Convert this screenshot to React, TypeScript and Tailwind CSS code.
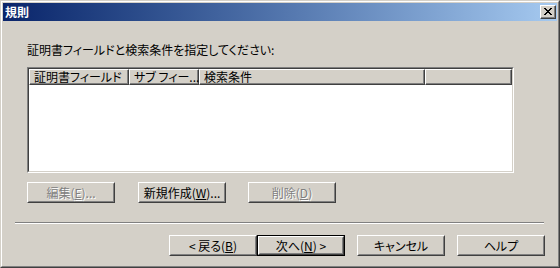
import React from "react";

const FONT =
  "font-['MS_UI_Gothic','Noto_Sans_CJK_JP','Noto_Sans',sans-serif] [font-feature-settings:'palt'] text-[12px] leading-[16px]";

function Btn({
  children,
  disabled,
  isDefault,
}: {
  children: React.ReactNode;
  disabled?: boolean;
  isDefault?: boolean;
}) {
  const inner = (
    <div className="h-full w-full border border-t-white border-l-white border-r-[#404040] border-b-[#404040] bg-[#d4d0c8]">
      <div
        className={
          "flex h-full w-full items-center justify-center border border-t-[#d4d0c8] border-l-[#d4d0c8] border-r-[#808080] border-b-[#808080] " +
          (disabled
            ? "text-[#808080] [text-shadow:1px_1px_0_#ffffff]"
            : "text-black")
        }
      >
        {children}
      </div>
    </div>
  );
  if (isDefault) {
    return (
      <div className="h-[21px] w-[88px] shrink-0 border border-black">{inner}</div>
    );
  }
  return <div className="h-[21px] w-[88px] shrink-0">{inner}</div>;
}

function HeaderCell({
  children,
  className,
}: {
  children?: React.ReactNode;
  className?: string;
}) {
  return (
    <div
      className={
        "h-full shrink-0 border border-t-white border-l-white border-r-[#404040] border-b-[#404040] " +
        (className ?? "")
      }
    >
      <div className="flex h-full w-full items-center whitespace-nowrap border-b border-r border-b-[#808080] border-r-[#808080] pl-[4px] leading-[14px]">
        {children}
      </div>
    </div>
  );
}

export default function App() {
  return (
    <div className={"h-[268px] w-[560px] overflow-hidden " + FONT}>
      <div className="h-full w-full border border-t-[#d4d0c8] border-l-[#d4d0c8] border-r-[#404040] border-b-[#404040] bg-[#d4d0c8]">
        <div className="flex h-full w-full flex-col border border-t-white border-l-white border-r-[#808080] border-b-[#808080] p-[1px]">
          {/* Title bar */}
          <div className="flex h-[18px] shrink-0 items-start justify-between bg-linear-to-r from-[#0a246a] to-[#a6caf0]">
            <span className="pl-[2px] pt-[1px] text-[12px] font-bold leading-[16px] text-white">
              規則
            </span>
            <div className="mr-[1px] mt-[2px] h-[14px] w-[16px] border border-t-white border-l-white border-r-[#404040] border-b-[#404040] bg-[#d4d0c8]">
              <div className="flex h-full w-full items-center justify-center border-b border-r border-b-[#808080] border-r-[#808080]">
                <svg width="8" height="7" viewBox="0 0 8 7" shapeRendering="crispEdges">
                  <path
                    d="M0 0h2v1h-2zM6 0h2v1h-2zM1 1h2v1h-2zM5 1h2v1h-2zM2 2h4v1h-4zM3 3h2v1h-2zM2 4h4v1h-4zM1 5h2v1h-2zM5 5h2v1h-2zM0 6h2v1h-2zM6 6h2v1h-2z"
                    fill="#000"
                  />
                </svg>
              </div>
            </div>
          </div>

          {/* Body */}
          <div className="flex flex-1 flex-col">
            <div className="ml-[24px] mt-[21px] h-[16px] text-black">
              証明書フィールドと検索条件を指定してください:
            </div>

            {/* List view */}
            <div className="ml-[24px] mt-[9px] h-[106px] w-[487px] border border-t-[#808080] border-l-[#808080] border-r-white border-b-white">
              <div className="flex h-full w-full flex-col border border-t-[#404040] border-l-[#404040] border-r-[#d4d0c8] border-b-[#d4d0c8] bg-white">
                <div className="flex h-[16px] shrink-0 bg-[#d4d0c8] text-black">
                  <HeaderCell className="w-[100px]">証明書フィールド</HeaderCell>
                  <HeaderCell className="w-[70px]">サブ フィー...</HeaderCell>
                  <HeaderCell className="w-[226px]">検索条件</HeaderCell>
                  <HeaderCell className="flex-1" />
                </div>
              </div>
            </div>

            {/* Action buttons */}
            <div className="ml-[24px] mt-[9px] flex">
              <Btn disabled>
                編集(<u>E</u>)...
              </Btn>
              <div className="ml-[23px]">
                <Btn>
                  新規作成(<u>W</u>)...
                </Btn>
              </div>
              <div className="ml-[22px]">
                <Btn disabled>
                  削除(<u>D</u>)
                </Btn>
              </div>
            </div>

            {/* Separator */}
            <div className="ml-[12px] mt-[19px] h-[2px] w-[529px] border-b border-t border-b-white border-t-[#808080]" />

            {/* Wizard buttons */}
            <div className="mt-[11px] flex justify-end pr-[12px]">
              <Btn>
                &lt; 戻る(<u>B</u>)
              </Btn>
              <Btn isDefault>
                次へ(<u>N</u>) &gt;
              </Btn>
              <div className="ml-[12px]">
                <Btn>キャンセル</Btn>
              </div>
              <div className="ml-[12px]">
                <Btn>ヘルプ</Btn>
              </div>
            </div>
          </div>
        </div>
      </div>
    </div>
  );
}
